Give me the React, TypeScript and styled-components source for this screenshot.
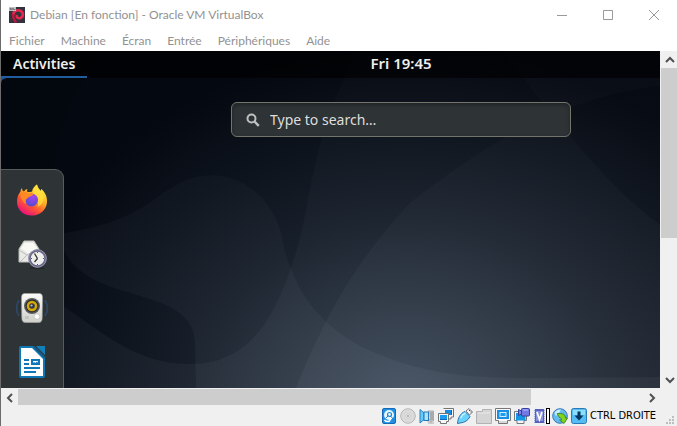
import React from 'react';
import styled, { createGlobalStyle, css } from 'styled-components';

const GlobalStyle = createGlobalStyle`
  *, *::before, *::after { box-sizing: border-box; }
  body { margin: 0; background: #f0f0f0; }
  button, input { font: inherit; color: inherit; }
  svg { display: block; }
`;

const plainButton = css`
  appearance: none;
  border: 0;
  margin: 0;
  padding: 0;
  background: none;
  cursor: default;
`;

const Window = styled.div`
  display: flex;
  flex-direction: column;
  height: 100vh;
  min-height: 240px;
  border-left: 1px solid #6c6c6c;
  background: #f0f0f0;
  font-family: Lato, 'Open Sans', sans-serif;
  font-size: 12px;
  color: #929292;
`;

const TitleBar = styled.header`
  display: flex;
  align-items: center;
  height: 30px;
  padding-left: 8px;
  background: #fff;
`;

const Title = styled.h1`
  flex: 1;
  margin: 0 0 0 5px;
  font-size: 12px;
  line-height: 16px;
  font-weight: 400;
  white-space: nowrap;
`;

const CaptionButton = styled.button`
  ${plainButton}
  display: grid;
  place-items: center;
  width: 46px;
  height: 28px;
  color: #999;
`;

const MenuBar = styled.nav`
  display: flex;
  height: 21px;
  background: #fff;
`;

const MenuItem = styled.button`
  ${plainButton}
  padding: 0 8px;
  line-height: 21px;
`;

const ScrollArea = styled.div`
  flex: 1;
  min-height: 0;
  display: grid;
  grid-template-columns: minmax(0, 1fr) 17px;
  grid-template-rows: minmax(0, 1fr) 17px;
`;

const Viewport = styled.main`
  overflow: hidden;
  background: #0a0e16;
`;

const Guest = styled.div`
  position: relative;
  display: flex;
  flex-direction: column;
  min-width: 800px;
  height: 100%;
  color: #eeeeec;
  font-family: 'Noto Sans', 'Open Sans', sans-serif;
`;

const WallpaperSvg = styled.svg`
  position: absolute;
  inset: 0;
  width: 100%;
  height: 100%;
`;

const TopBar = styled.div`
  position: relative;
  display: grid;
  grid-template-columns: 1fr auto 1fr;
  flex: none;
  height: 27px;
  background: rgba(0, 0, 0, 0.65);
  font-size: 14px;
  font-weight: 600;
`;

const Activities = styled.button`
  ${plainButton}
  justify-self: start;
  padding: 0 12px;
  border-bottom: 2px solid #215d9c;
  line-height: 25px;
`;

const Clock = styled.button`
  ${plainButton}
  padding-bottom: 2px;
  font-size: 15px;
  line-height: 25px;
`;

const Desktop = styled.div`
  position: relative;
  flex: 1;
  min-height: 0;
  display: flex;
  flex-direction: column;
  overflow: hidden;
`;

const Corner = styled.svg`
  position: absolute;
  left: 0;
  top: 0;
`;

const SearchBox = styled.label`
  flex: none;
  align-self: center;
  display: flex;
  align-items: center;
  gap: 10px;
  width: 340px;
  height: 35px;
  margin: 24px 0 32px;
  padding: 0 14px;
  border: 1px solid #73746a;
  border-radius: 6px;
  background: #2e3436;
  box-shadow: inset 0 2px 4px rgba(0, 0, 0, 0.35);
`;

const SearchInput = styled.input`
  flex: 1;
  min-width: 0;
  border: 0;
  padding: 0;
  outline: 0;
  background: none;
  font-size: 14px;
  line-height: 20px;
  &::placeholder { color: #dededc; opacity: 1; }
`;

const Dock = styled.nav`
  flex: 1;
  align-self: flex-start;
  display: flex;
  flex-direction: column;
  gap: 22px;
  padding: 14px 15px 0;
  border: solid #565b5b;
  border-width: 1px 1px 0 0;
  border-radius: 0 9px 0 0;
  background: #2e3436;
`;

const DockButton = styled.button`
  ${plainButton}
  width: 32px;
  height: 32px;
`;

const Scrollbar = styled.div<{ $vertical?: boolean }>`
  display: flex;
  flex-direction: ${p => (p.$vertical ? 'column' : 'row')};
  padding: ${p => (p.$vertical ? '0 0 0 1px' : '1px 0 0')};
  background: #f0f0f0;
`;

const ArrowButton = styled.button`
  ${plainButton}
  display: grid;
  place-items: center;
  flex: none;
  min-width: 17px;
  min-height: 17px;
  color: #505050;
`;

const Track = styled.div<{ $vertical?: boolean }>`
  flex: 1;
  display: flex;
  flex-direction: ${p => (p.$vertical ? 'column' : 'row')};
`;

const Thumb = styled.div<{ $share: number }>`
  flex: 0 0 ${p => p.$share}%;
  background: #cdcdcd;
`;

const StatusBar = styled.footer`
  display: flex;
  justify-content: flex-end;
  align-items: center;
  gap: 3px;
  height: 21px;
  padding-right: 2px;
  color: #000;
  font-family: 'DejaVu Sans Condensed', 'DejaVu Sans', sans-serif;
  font-size: 11px;
`;

const StatusButton = styled.button`
  ${plainButton}
  width: 16px;
  height: 16px;
`;

const HostKey = styled.span`
  line-height: 16px;
  white-space: nowrap;
`;

const Grip = styled.svg`
  align-self: flex-end;
  margin: 0 0 1px 6px;
`;

const DebianBadge = () => (
  <svg width="16" height="16" viewBox="0 0 16 16" aria-hidden="true">
    <rect width="16" height="16" fill="#33333d" />
    <path d="M4.500 8.500C3.500 5 7.500 2.500 10.500 3.500c4 1.200 4.500 6 1 7.500-2.500 1-4.500-1-3.500-3" fill="none" stroke="#e8284c" strokeWidth="2.600" />
    <path d="M4 7c-.5 4 1.500 6 3 8.500" fill="none" stroke="#c3143a" strokeWidth="2.400" />
    <path d="M0 0h7v4H0z" fill="#bfc1c3" />
    <path d="M1 1.500h1.500v1H1zM3.500 1.500h1v1h-1zM5 2.500h1.500" stroke="#555" strokeWidth=".6" fill="none" />
  </svg>
);

const Wallpaper = () => (
  <WallpaperSvg viewBox="0 0 800 337" preserveAspectRatio="xMinYMin slice" aria-hidden="true">
    <defs>
      <radialGradient id="glow" gradientUnits="userSpaceOnUse" cx="0" cy="0" r="1" gradientTransform="translate(405 345) scale(410 350)">
        <stop offset="0" stopColor="#354253" />
        <stop offset=".25" stopColor="#28323f" />
        <stop offset=".5" stopColor="#18202b" />
        <stop offset=".75" stopColor="#0d131d" />
        <stop offset="1" stopColor="#040810" />
      </radialGradient>
      <linearGradient id="sheen" gradientUnits="userSpaceOnUse" x1="0" y1="0" x2="0" y2="337">
        <stop offset="0" stopColor="#dce4f4" stopOpacity=".01" />
        <stop offset="1" stopColor="#dce4f4" stopOpacity=".045" />
      </linearGradient>
    </defs>
    <rect width="800" height="337" fill="url(#glow)" />
    <path d="M110-10C75 30 55 80 53 116V337H0V-10z" fill="#000" opacity=".12" />
    <path d="M360-10C335 45 325 70 321 87C304 150 307 168 290 217C270 276 242 315 186 313C135 313 100 280 63 256L0 250V337H800V-10z" fill="url(#sheen)" />
    <path d="M63 182C135 171 147 150 172 136C207 113 252 124 274 166C285 190 280 196 290 217C310 275 362 298 382 305C450 332 500 327 659 326L800 320V337H195L194 292C193 233 88 255 63 199z" fill="url(#sheen)" />
    <path d="M659 174C600 130 560 72 500 0V-10H800V34L659 34C550 50 480 97 409 152C355 210 325 263 295 337H800V270z" fill="url(#sheen)" fillRule="evenodd" />
  </WallpaperSvg>
);

const Magnifier = () => (
  <svg width="14" height="14" viewBox="0 0 14 14" aria-hidden="true">
    <circle cx="5.500" cy="5.500" r="4" fill="none" stroke="#bfc1c0" strokeWidth="2" />
    <path d="M8.500 8.500l4.300 4.300" stroke="#bfc1c0" strokeWidth="2.400" />
  </svg>
);

const Firefox = () => (
  <svg width="32" height="32" viewBox="0 0 32 32" aria-hidden="true">
    <defs>
      <linearGradient id="ffBody" x1=".85" y1=".1" x2=".25" y2="1">
        <stop offset="0" stopColor="#fff14a" />
        <stop offset=".35" stopColor="#ffb024" />
        <stop offset=".65" stopColor="#ff5634" />
        <stop offset="1" stopColor="#e90c83" />
      </linearGradient>
      <radialGradient id="ffGlobe" cx=".6" cy=".25" r=".8">
        <stop offset="0" stopColor="#a445ef" />
        <stop offset="1" stopColor="#514bd1" />
      </radialGradient>
    </defs>
    <path d="M1 18c0-5 1.500-8 3.500-10.500.2-1.500.5-2.500 1.500-3.500 0 2 .8 3 2 3.500C9 6 10 5.300 11.500 5c-.7 1.200-.6 2.300 0 3 2 .1 3.500 0 4.500-.5.5-3 2.500-5.500 5-7 .5 3 2 5 4 6.500 0-1 0-1.500.2-2C28 7 31 11.500 31 17c0 8-6 14.500-15 14.500C7 31.500 1 25.500 1 18z" fill="url(#ffBody)" />
    <path d="M21 .5C18 3 16.500 7 17.500 11c3 4 6 7 4 12 5-2 7-7 5.500-12C26 7 22 5 21 .5z" fill="#ffe13e" opacity=".75" />
    <circle cx="15.500" cy="16" r="6.500" fill="url(#ffGlobe)" />
    <path d="M4.500 9c3-1.500 5.500-1.500 8 .3 2 0 4 .3 5 1.200-.5 1.200-2.500 1.500-4 2.300-1.500.8-2.200 1.700-3.500 2.700-.5 1.500-.3 3 .5 4.500-3-.5-6-5-6-11z" fill="#ff8a22" />
    <path d="M2 22c3 8 13 10 20 5-5 5.500-16 6-20-5z" fill="#f21877" opacity=".7" />
  </svg>
);

const Evolution = () => (
  <svg width="32" height="32" viewBox="0 0 32 32" aria-hidden="true">
    <path d="M3 11L8 3h10l5 8v13H3z" fill="#e9e9e6" stroke="#bcbcb8" />
    <path d="M5 10l4-5h8l4 5-8 6z" fill="#f8f8f5" />
    <path d="M3 12l8 5-7 7M11 17l4-2 8-4" fill="none" stroke="#bdbdb9" />
    <ellipse cx="21" cy="30" rx="8" ry="1.200" fill="#171b1c" opacity=".5" />
    <circle cx="21.500" cy="20.500" r="8" fill="#eeeeec" stroke="#6b6887" strokeWidth="2.500" />
    <circle cx="21.500" cy="20.500" r="8.800" fill="none" stroke="#a7a4c4" strokeWidth=".7" />
    <path d="M21.500 20.500l-3-5M21.500 20.500l-3 3.500" stroke="#333" strokeWidth="1.300" />
    <path d="M21.500 14v1M21.500 26v1M15 20.500h1M27 20.500h1" stroke="#555" />
  </svg>
);

const Rhythmbox = () => (
  <svg width="32" height="32" viewBox="0 0 32 32" aria-hidden="true">
    <defs>
      <linearGradient id="speaker" x1="0" y1="0" x2="0" y2="1">
        <stop offset="0" stopColor="#fbfbfa" />
        <stop offset="1" stopColor="#cfcfcb" />
      </linearGradient>
    </defs>
    <path d="M3 8c-3 5-3 11 0 16M29 8c3 5 3 11 0 16" fill="none" stroke="#2d4967" strokeWidth="1.600" />
    <path d="M8.500 1.500h15q3 0 3 4l-.3 20q0 5-3.500 5H9.300q-3.500 0-3.500-5L5.500 5.500q0-4 3-4z" fill="url(#speaker)" stroke="#a6a6a2" strokeWidth=".6" />
    <circle cx="16" cy="14" r="8" fill="#5b5d5c" />
    <circle cx="16" cy="14" r="6.500" fill="#2a2b2b" />
    <circle cx="16" cy="14" r="5.300" fill="#d5a90c" />
    <circle cx="16" cy="14" r="2.800" fill="#353945" />
    <circle cx="15.500" cy="13.500" r="1.100" fill="#b7bdcc" />
    <rect x="9" y="24" width="4" height="3" fill="#c4c4c0" />
    <circle cx="21" cy="24.500" r="2.800" fill="#fff" stroke="#b5b5b1" strokeWidth=".6" />
  </svg>
);

const Writer = () => (
  <svg width="32" height="32" viewBox="0 0 32 32" aria-hidden="true">
    <path d="M4.500 0h13L29 11.500V30q0 2-2 2H5q-2 0-2-2V1.500Q3 0 4.500 0z" fill="#0f77b5" />
    <path d="M5 2h11l11 11v17H5z" fill="#fff" />
    <path d="M20 0h9v9z" fill="#1080bd" />
    <path d="M17.500 0L29 11.500" stroke="#1b567a" strokeWidth="2" />
    <path d="M8 14h5M8 18h5M8 22h16M8 26h12" stroke="#0f77b5" strokeWidth="2" />
    <rect x="16" y="14" width="7" height="4" fill="#fff" stroke="#0f77b5" strokeWidth="2" />
    <path d="M16 18l2-2 1.500 1 1.500-1.500 2 2.500z" fill="#0f77b5" />
  </svg>
);

const dockApps = [
  { name: 'Firefox', Icon: Firefox },
  { name: 'Evolution', Icon: Evolution },
  { name: 'Rhythmbox', Icon: Rhythmbox },
  { name: 'LibreOffice Writer', Icon: Writer },
];

const statusIcons: { name: string; art: React.ReactNode }[] = [
  {
    name: 'Disque dur',
    art: (
      <>
        <rect x="1.500" y=".5" width="13" height="15" rx="1.500" fill="#1d91e6" stroke="#1768b5" />
        <circle cx="8" cy="7" r="5" fill="#e6f6ff" />
        <path d="M3.500 12q2 2.500 5 1l1.500-3" fill="none" stroke="#fff" strokeWidth="1.500" />
        <circle cx="8.500" cy="6.500" r="2" fill="none" stroke="#2686cf" strokeWidth="1.200" />
        <path d="M4.500 10.500l3-3M10 8.500l3 3.500" stroke="#2a7cc4" />
      </>
    ),
  },
  {
    name: 'Disque optique',
    art: (
      <>
        <circle cx="8" cy="8" r="7.300" fill="#dadada" stroke="#b8b8b8" />
        <circle cx="8" cy="8" r="2.200" fill="#e9e9e9" stroke="#cfcfcf" />
        <circle cx="8" cy="8" r="1" fill="#a7a7a7" />
      </>
    ),
  },
  {
    name: 'Audio',
    art: (
      <>
        <path d="M9 3h5.500v10H8v-2h3M9 15h6M12 13v2" fill="#ccc" stroke="#a9a9a9" />
        <path d="M11 5h3M11 7h3M11 9h3M11 11h3" stroke="#888" />
        <path d="M1 1.500l4 3.500v6.500L1 15z" fill="#65cdfa" stroke="#2c7fc0" />
        <rect x="5" y="4" width="4.500" height="8.500" fill="#a7e5ff" stroke="#2777bb" />
      </>
    ),
  },
  {
    name: 'Réseau',
    art: (
      <>
        <path d="M5.500.5h10v8.500H13v2H9" fill="#f5f5f5" stroke="#747474" />
        <rect x="7" y="2" width="7" height="5" fill="#168be0" />
        <path d="M.5 5.500h10v8H8.500v2h-6v-2h-2z" fill="#f7f7f7" stroke="#747474" />
        <rect x="2" y="7" width="7" height="5" fill="#1b9cf1" />
        <path d="M2 11.500h7M13.500 2v5" stroke="#1267b4" />
      </>
    ),
  },
  {
    name: 'USB',
    art: (
      <>
        <path d="M9 3l3-2.500 3.500 3.500-3 3z" fill="#f7f7f7" stroke="#777" />
        <path d="M8 3.500l5 5c-2 4-5 6-10 6.500l-2.500.5C1 10 3 5.500 8 3.500z" fill="#69d3fb" stroke="#2a75b2" />
        <path d="M3.500 10c1-2.500 2.500-4 5-5" fill="none" stroke="#c9f4ff" strokeWidth="1.500" />
        <path d="M12 2.500h1M13.500 4h1" stroke="#444" />
      </>
    ),
  },
  {
    name: 'Dossiers partagés',
    art: (
      <>
        <path d="M.5 15.500v-12h6v-2h9v14z" fill="#d5d5d5" stroke="#b2b2b2" />
        <path d="M2 5h12" stroke="#e8e8e8" />
      </>
    ),
  },
  {
    name: 'Affichage',
    art: (
      <>
        <path d="M.5.5h15v12h-3v3h-9v-3h-3z" fill="#fafafa" stroke="#777" />
        <rect x="2" y="2" width="12" height="9" fill="#1b8fe6" />
        <rect x="5" y="4.500" width="6" height="4" fill="#1b9df0" stroke="#d5f0ff" />
        <path d="M4 14h8" stroke="#b5b5b5" />
      </>
    ),
  },
  {
    name: 'Enregistrement',
    art: (
      <>
        <path d="M.5 3.500h12v9H10v3H3v-3H.5z" fill="#f4f4f4" stroke="#777" />
        <rect x="2" y="5" width="9.500" height="7.500" fill="#1397e5" />
        <rect x="7.500" y=".5" width="8" height="7.500" rx="1" fill="#727ae1" stroke="#383e9b" />
        <path d="M4.500 1.500l3 1.500v3l-3 1.500z" fill="#7988e4" stroke="#383e9b" />
        <path d="M9 2h5" stroke="#b8bdff" />
      </>
    ),
  },
  {
    name: 'Processeur',
    art: (
      <>
        <rect x="1.500" y="1" width="10" height="14" fill="#5662b8" />
        <rect x="3" y="3" width="7" height="10" fill="#8792dc" />
        <path d="M1.500 1v14M11.500 1v14" stroke="#dfe4ff" strokeDasharray="1 1" />
        <path d="M4 4l2.500 7.500L9 4" fill="none" stroke="#fff" strokeWidth="1.700" />
        <rect x="13.500" y=".5" width="3" height="15" fill="#fff" stroke="#000" />
      </>
    ),
  },
  {
    name: 'Intégration de la souris',
    art: (
      <>
        <circle cx="8" cy="8" r="7.300" fill="#64bcee" stroke="#3478b9" />
        <path d="M2.500 5C4 2 7 1 9 1.500L7 5 4 8z" fill="#c9efff" />
        <path d="M5 5.500h3.500c3 0 5 1.500 5 4.500h2l-3.500 5.500L7.500 12h2c0-1.500-.5-2-2-2.500z" fill="#7fd321" stroke="#347d18" strokeWidth=".8" />
      </>
    ),
  },
  {
    name: 'Capture du clavier',
    art: (
      <>
        <rect x=".5" y=".5" width="15" height="15" rx="2" fill="#54bdf3" stroke="#2a79b9" />
        <path d="M2 2h12v5H2z" fill="#8bdefd" />
        <path d="M6.500 3.500h3v4h3L8 12.500 3.500 7.500h3z" fill="#07365f" />
      </>
    ),
  },
];

const chevrons = {
  up: 'M1 7l4-4 4 4',
  down: 'M1 3l4 4 4-4',
  left: 'M7 1L3 5l4 4',
  right: 'M3 1l4 4-4 4',
};

const ScrollArrow = ({ dir, label }: { dir: keyof typeof chevrons; label: string }) => (
  <ArrowButton aria-label={label}>
    <svg width="10" height="10" viewBox="0 0 10 10">
      <path d={chevrons[dir]} fill="none" stroke="currentColor" strokeWidth="2" />
    </svg>
  </ArrowButton>
);

const menus = ['Fichier', 'Machine', 'Écran', 'Entrée', 'Périphériques', 'Aide'];

const captions = [
  { label: 'Réduire', d: 'M0 5.500h10' },
  { label: 'Agrandir', d: 'M.5.5h9v9h-9z' },
  { label: 'Fermer', d: 'M0 0l10 10M10 0L0 10' },
];

export default function App() {
  return (
    <Window>
      <GlobalStyle />
      <TitleBar>
        <DebianBadge />
        <Title>Debian [En fonction] - Oracle VM VirtualBox</Title>
        {captions.map(c => (
          <CaptionButton key={c.label} aria-label={c.label}>
            <svg width="10" height="10" viewBox="0 0 10 10">
              <path d={c.d} fill="none" stroke="currentColor" />
            </svg>
          </CaptionButton>
        ))}
      </TitleBar>
      <MenuBar>
        {menus.map(m => <MenuItem key={m}>{m}</MenuItem>)}
      </MenuBar>
      <ScrollArea>
        <Viewport>
          <Guest>
            <Wallpaper />
            <TopBar>
              <Activities>Activities</Activities>
              <Clock>Fri 19:45</Clock>
            </TopBar>
            <Desktop>
              <Corner width="6" height="6" viewBox="0 0 6 6" aria-hidden="true">
                <path d="M0 0h6Q0 0 0 6z" fill="#215d9c" />
              </Corner>
              <SearchBox>
                <Magnifier />
                <SearchInput type="text" placeholder="Type to search…" aria-label="Type to search" />
              </SearchBox>
              <Dock aria-label="Dash">
                {dockApps.map(({ name, Icon }) => (
                  <DockButton key={name} aria-label={name}><Icon /></DockButton>
                ))}
              </Dock>
            </Desktop>
          </Guest>
        </Viewport>
        <Scrollbar $vertical>
          <ScrollArrow dir="up" label="Défiler vers le haut" />
          <Track $vertical><Thumb $share={56} /></Track>
          <ScrollArrow dir="down" label="Défiler vers le bas" />
        </Scrollbar>
        <Scrollbar>
          <ScrollArrow dir="left" label="Défiler vers la gauche" />
          <Track><Thumb $share={82} /></Track>
          <ScrollArrow dir="right" label="Défiler vers la droite" />
        </Scrollbar>
      </ScrollArea>
      <StatusBar>
        {statusIcons.map(({ name, art }) => (
          <StatusButton key={name} aria-label={name}>
            <svg width="17" height="16" viewBox="0 0 17 16">{art}</svg>
          </StatusButton>
        ))}
        <HostKey>CTRL DROITE</HostKey>
        <Grip width="10" height="10" viewBox="0 0 10 10" aria-hidden="true">
          <path d="M7 1h2v2H7zM4 4h2v2H4zM7 4h2v2H7zM1 7h2v2H1zM4 7h2v2H4zM7 7h2v2H7z" fill="#bdbdbd" />
        </Grip>
      </StatusBar>
    </Window>
  );
}
